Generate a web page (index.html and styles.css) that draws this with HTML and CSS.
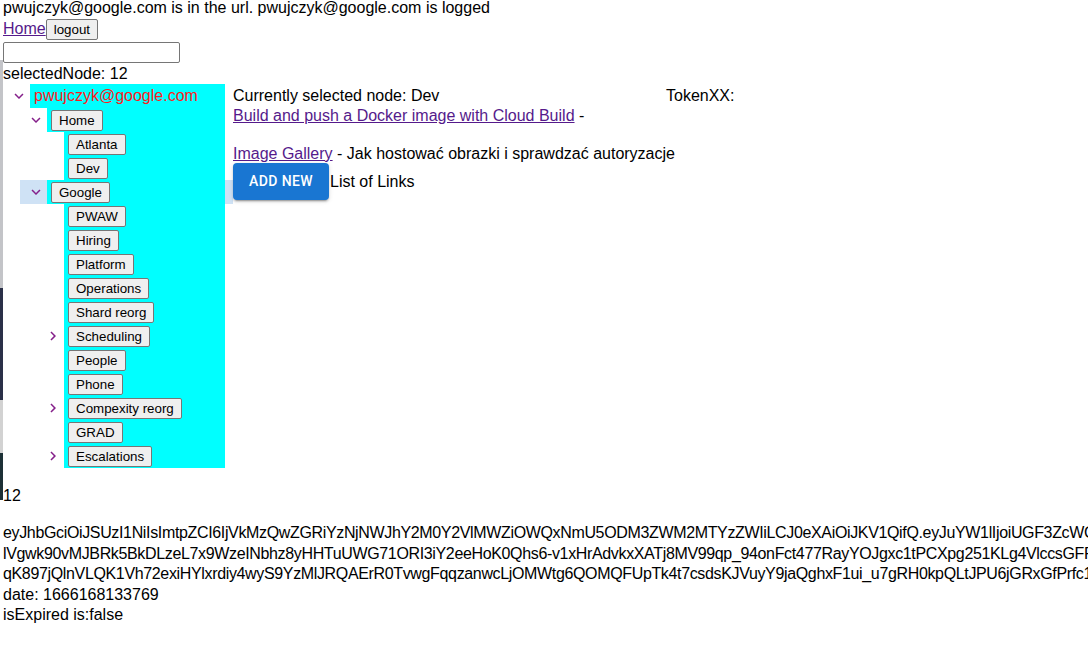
FILE: index.html
```html
<!DOCTYPE html>
<html lang="en">
<head>
<meta charset="utf-8">
<title>Links</title>
<link rel="stylesheet" href="styles.css">
</head>
<body>
<div class="edge-strip"></div>
<div class="page">
  <div class="line-user">pwujczyk@google.com is in the url. pwujczyk@google.com is logged</div>
  <div class="line-nav">
    <a class="link" href="#">Home</a><button class="native-btn">logout</button>
  </div>
  <input class="search" type="text">
  <div class="line-selected">selectedNode: 12</div>

  <div class="main">
    <ul class="tree">
      <li>
        <div class="tree-content">
          <div class="tree-icon"><svg viewBox="0 0 24 24"><path d="M16.59 8.59 12 13.17 7.41 8.59 6 10l6 6 6-6z"/></svg></div>
          <div class="tree-label root-label">pwujczyk@google.com</div>
        </div>
        <ul class="tree-group">
          <li>
            <div class="tree-content">
              <div class="tree-icon"><svg viewBox="0 0 24 24"><path d="M16.59 8.59 12 13.17 7.41 8.59 6 10l6 6 6-6z"/></svg></div>
              <div class="tree-label"><button class="native-btn">Home</button></div>
            </div>
            <ul class="tree-group">
              <li><div class="tree-content"><div class="tree-icon"></div><div class="tree-label"><button class="native-btn">Atlanta</button></div></div></li>
              <li><div class="tree-content"><div class="tree-icon"></div><div class="tree-label"><button class="native-btn">Dev</button></div></div></li>
            </ul>
          </li>
          <li>
            <div class="tree-content selected">
              <div class="tree-icon"><svg viewBox="0 0 24 24"><path d="M16.59 8.59 12 13.17 7.41 8.59 6 10l6 6 6-6z"/></svg></div>
              <div class="tree-label"><button class="native-btn">Google</button></div>
            </div>
            <ul class="tree-group">
              <li><div class="tree-content"><div class="tree-icon"></div><div class="tree-label"><button class="native-btn">PWAW</button></div></div></li>
              <li><div class="tree-content"><div class="tree-icon"></div><div class="tree-label"><button class="native-btn">Hiring</button></div></div></li>
              <li><div class="tree-content"><div class="tree-icon"></div><div class="tree-label"><button class="native-btn">Platform</button></div></div></li>
              <li><div class="tree-content"><div class="tree-icon"></div><div class="tree-label"><button class="native-btn">Operations</button></div></div></li>
              <li><div class="tree-content"><div class="tree-icon"></div><div class="tree-label"><button class="native-btn">Shard reorg</button></div></div></li>
              <li><div class="tree-content"><div class="tree-icon"><svg viewBox="0 0 24 24"><path d="M10 6 8.59 7.41 13.170 12l-4.58 4.59L10 18l6-6z"/></svg></div><div class="tree-label"><button class="native-btn">Scheduling</button></div></div></li>
              <li><div class="tree-content"><div class="tree-icon"></div><div class="tree-label"><button class="native-btn">People</button></div></div></li>
              <li><div class="tree-content"><div class="tree-icon"></div><div class="tree-label"><button class="native-btn">Phone</button></div></div></li>
              <li><div class="tree-content"><div class="tree-icon"><svg viewBox="0 0 24 24"><path d="M10 6 8.59 7.41 13.17 12l-4.58 4.59L10 18l6-6z"/></svg></div><div class="tree-label"><button class="native-btn">Compexity reorg</button></div></div></li>
              <li><div class="tree-content"><div class="tree-icon"></div><div class="tree-label"><button class="native-btn">GRAD</button></div></div></li>
              <li><div class="tree-content"><div class="tree-icon"><svg viewBox="0 0 24 24"><path d="M10 6 8.59 7.41 13.17 12l-4.58 4.59L10 18l6-6z"/></svg></div><div class="tree-label"><button class="native-btn">Escalations</button></div></div></li>
            </ul>
          </li>
        </ul>
      </li>
    </ul>

    <div class="detail">
      <div class="detail-head">
        <span class="current">Currently selected node: Dev</span>
        <span>TokenXX:</span>
      </div>
      <div class="link-line"><a class="link" href="#">Build and push a Docker image with Cloud Build</a> -</div>
      <div class="link-line spaced"><a class="link" href="#">Image Gallery</a> - Jak hostować obrazki i sprawdzać autoryzacje</div>
      <div class="actions">
        <button class="add-btn">Add new</button>
        <span class="list-title">List of Links</span>
      </div>
    </div>
  </div>

  <div class="count">12</div>
  <div class="token">eyJhbGciOiJSUzI1NiIsImtpZCI6IjVkMzQwZGRiYzNjNWJhY2M0Y2VlMWZiOWQxNmU5ODM3ZWM2MTYzZWIiLCJ0eXAiOiJKV1QifQ.eyJuYW1lIjoiUGF3ZcWCIFd1amN6eWsiLCJwaWN0dXJlIjoiaHR0cHM6Ly9saDMu<br>lVgwk90vMJBRk5BkDLzeL7x9WzeINbhz8yHHTuUWG71ORI3iY2eeHoK0Qhs6-v1xHrAdvkxXATj8MV99qp_94onFct477RayYOJgxc1tPCXpg251KLg4VlccsGFReW3kPq8xTzb1Lr5Nd<br>qK897jQlnVLQK1Vh72exiHYlxrdiy4wyS9YzMlJRQAErR0TvwgFqqzanwcLjOMWtg6QOMQFUpTk4t7csdsKJVuyY9jaQghxF1ui_u7gRH0kpQLtJPU6jGRxGfPrfc1MhXq0Zt7Rk2aWc</div>
  <div class="meta">date: 1666168133769</div>
  <div class="meta">isExpired is:false</div>
</div>
</body>
</html>
```

FILE: styles.css
```css
html, body {
  margin: 0;
  padding: 0;
  overflow: hidden;
  background: #ffffff;
}

body {
  font-family: "Liberation Sans", Arial, sans-serif;
  font-size: 16px;
  line-height: 20.5px;
  color: #000000;
}

.edge-strip {
  position: fixed;
  left: 0;
  top: 0;
  width: 3px;
  height: 659px;
  background: linear-gradient(to bottom,
    transparent 0, transparent 60px,
    #c3c4c8 60px, #c3c4c8 288px,
    #2a3048 288px, #2a3048 400px,
    #d2d2d2 400px, #d2d2d2 453px,
    #1c3036 453px, #1c3036 500px,
    transparent 500px);
}

.page {
  padding-left: 3px;
}

.line-user {
  line-height: 16px;
  height: 16px;
  white-space: nowrap;
}

.line-nav {
  display: flex;
  align-items: baseline;
  margin-top: 3px;
}

.link {
  color: #551a8b;
  text-decoration: underline;
}

.native-btn {
  font-family: "Liberation Sans", Arial, sans-serif;
  font-size: 13.333px;
  line-height: 15px;
  padding: 2px 7px;
  border: 1px solid #767676;
  border-radius: 2px;
  background: #efefef;
  color: #000000;
  margin: 0;
}

.search {
  display: block;
  box-sizing: border-box;
  width: 177px;
  height: 21px;
  margin: 2px 0 0 0;
  border: 1px solid #767676;
  border-radius: 2px;
  padding: 1px 2px;
  font-size: 13.333px;
}

.line-selected {
  margin-top: 1px;
  height: 20px;
}

.main {
  display: flex;
  align-items: flex-start;
}

.tree, .tree-group {
  list-style: none;
  margin: 0;
  padding: 0;
}

.tree {
  width: 230px;
  flex: none;
}

.tree-group {
  margin-left: 17px;
}

.tree-content {
  display: flex;
  align-items: center;
  padding: 0 8px;
  height: 24px;
}

.tree-content.selected {
  background: #cfe2f5;
}

.tree-icon {
  width: 15px;
  margin-right: 4px;
  flex: none;
  display: flex;
  justify-content: center;
  align-items: center;
}

.tree-icon svg {
  width: 18px;
  height: 18px;
  flex: none;
  fill: #85208a;
}

.tree-label {
  flex: 1;
  height: 24px;
  padding-left: 4px;
  background: #00ffff;
  display: flex;
  align-items: center;
  line-height: 24px;
  font-family: "Liberation Sans", Arial, sans-serif;
  font-size: 16px;
}

.root-label {
  color: #ff1a1a;
}

.detail {
  padding-top: 1.5px;
  flex: 1;
  min-width: 0;
}

.detail-head {
  display: flex;
  white-space: nowrap;
}

.current {
  width: 433px;
  flex: none;
}

.link-line {
  white-space: nowrap;
}

.link-line.spaced {
  margin-top: 17px;
}

.actions {
  display: flex;
  align-items: flex-start;
}

.add-btn {
  font-family: Roboto, "Liberation Sans", sans-serif;
  font-weight: 500;
  font-size: 14px;
  line-height: 24.5px;
  letter-spacing: 0.4px;
  text-transform: uppercase;
  color: #ffffff;
  background: #1976d2;
  border: none;
  border-radius: 4px;
  padding: 6px 16px;
  min-width: 64px;
  margin: -1px 0 0 0;
  box-shadow: 0 3px 1px -2px rgba(0,0,0,0.2), 0 2px 2px 0 rgba(0,0,0,0.14), 0 1px 5px 0 rgba(0,0,0,0.12);
}

.list-title {
  margin-top: 7.5px;
  margin-left: 1px;
}

.count {
  margin-top: 18px;
}

.token {
  margin-top: 16.5px;
  white-space: nowrap;
  overflow: hidden;
  letter-spacing: -0.35px;
}

.meta {
  white-space: nowrap;
}
```
